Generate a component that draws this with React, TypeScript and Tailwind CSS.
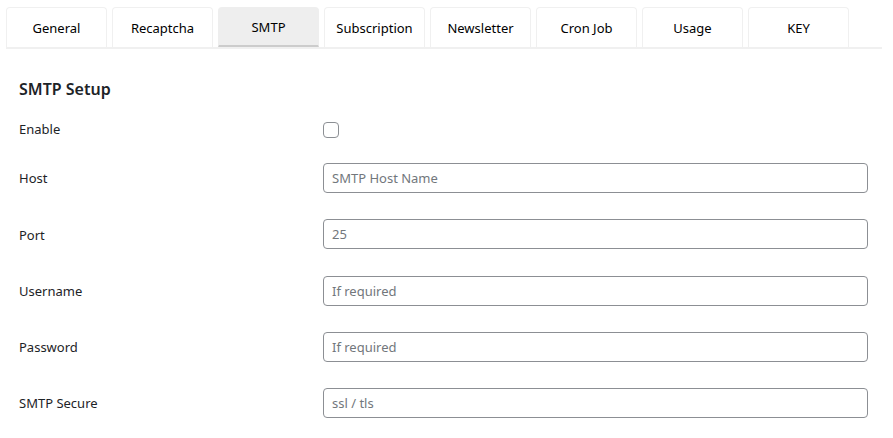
import React from "react";

const tabs = ["General", "Recaptcha", "SMTP", "Subscription", "Newsletter", "Cron Job", "Usage", "KEY"];

const fields = [
  { label: "Host", placeholder: "SMTP Host Name" },
  { label: "Port", placeholder: "25" },
  { label: "Username", placeholder: "If required" },
  { label: "Password", placeholder: "If required" },
  { label: "SMTP Secure", placeholder: "ssl / tls" },
];

export default function App() {
  return (
    <div
      className="w-[893px] h-[438px] bg-white overflow-hidden text-[#1d2327]"
      style={{ fontFamily: '"Noto Sans", "Open Sans", sans-serif' }}
    >
      <div className="ml-[6px] mr-[11px] pt-[7px]">
        <div className="flex gap-[5px] border-b-2 border-[#f0f0f0]">
          {tabs.map((t) => {
            const active = t === "SMTP";
            return (
              <div
                key={t}
                className={
                  active
                    ? "w-[101px] h-[40px] pt-[2px] flex items-center justify-center rounded-t-[4px] bg-[#eeeeee] border border-[#eeeeee] border-b-2 border-b-[#cccccc] -mb-[2px] text-[13px] text-black"
                    : "w-[101px] h-[40px] pt-[2px] flex items-center justify-center rounded-t-[4px] bg-white border border-b-0 border-[#f0f0f0] text-[13px] text-black"
                }
              >
                {t}
              </div>
            );
          })}
        </div>
        <div className="pl-[13px] pr-[14px]">
          <h2 className="mt-[30px] h-[20px] leading-[20px] text-[16px] font-semibold text-[#1d2327]">
            SMTP Setup
          </h2>
          <div className="mt-[16px] flex items-center h-[30px]">
            <div className="w-[304px] text-[13px] text-[#1d2327]">Enable</div>
            <div className="w-[16px] h-[16px] rounded-[4px] border border-[#8c8f94] bg-white" />
          </div>
          <div className="mt-[18px] flex flex-col gap-[26.25px]">
            {fields.map((f) => (
              <div key={f.label} className="flex items-center h-[30px]">
                <div className="w-[304px] pt-[2px] text-[13px] text-[#1d2327]">{f.label}</div>
                <input
                  className="flex-1 h-[30px] rounded-[4px] border border-[#8c8f94] px-[8px] text-[13px] text-[#2c3338] placeholder:text-[#72777c] outline-none bg-white"
                  style={{ fontFamily: '"Noto Sans", "Open Sans", sans-serif' }}
                  placeholder={f.placeholder}
                />
              </div>
            ))}
          </div>
        </div>
      </div>
    </div>
  );
}
